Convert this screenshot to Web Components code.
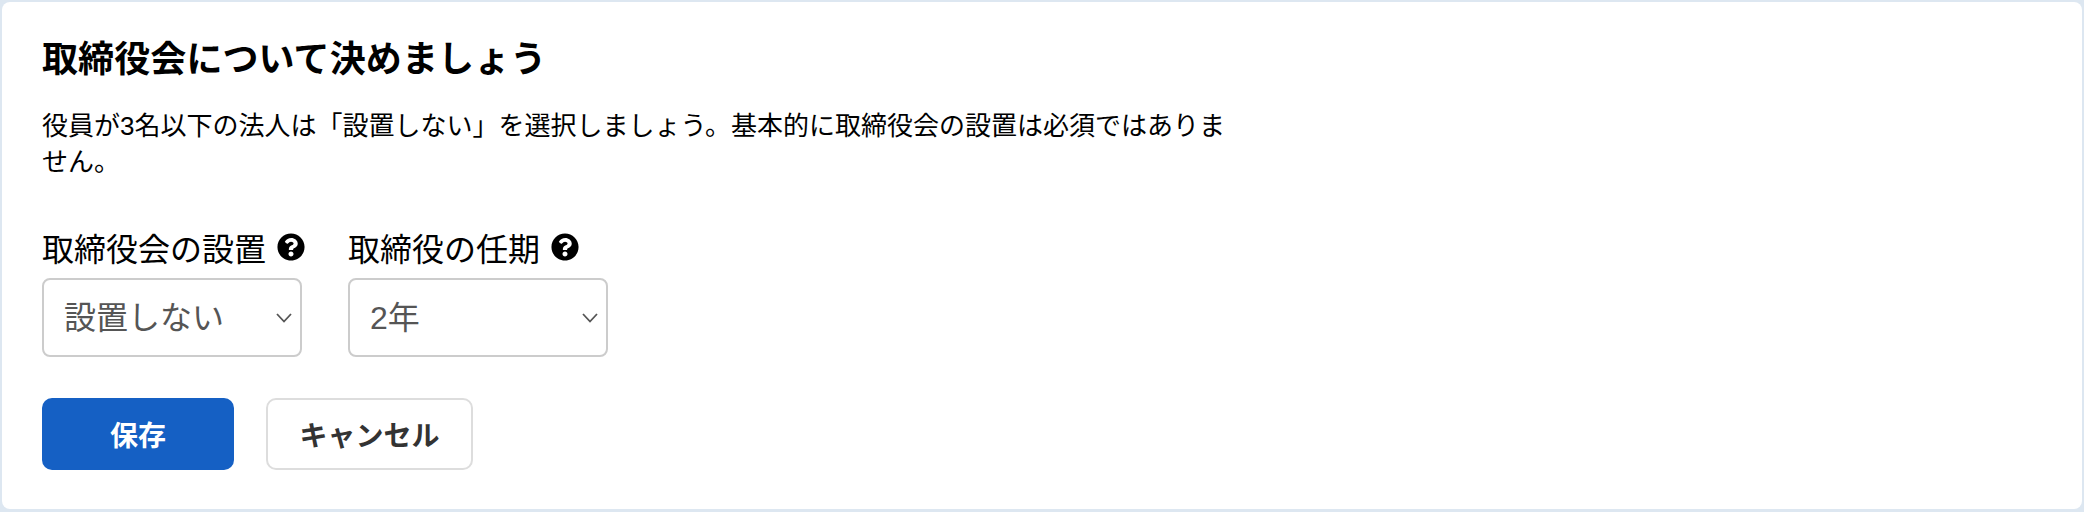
<!DOCTYPE html>
<html lang="ja">
<head>
<meta charset="utf-8">
<title>取締役会</title>
<style>
html, body { margin: 0; height: 100%; background: #dde7f1; }
body { font-family: "Liberation Sans", "Noto Sans CJK JP", sans-serif; color: #000; }
</style>
</head>
<body>
<settings-card>
	<span slot="title">取締役会について決めましょう</span>
	<span slot="lead">役員が3名以下の法人は「設置しない」を選択しましょう。基本的に取締役会の設置は必須ではありません。</span>
	<select-field label="取締役会の設置" value="設置しない"></select-field>
	<select-field label="取締役の任期" value="2年"></select-field>
	<action-button slot="actions" kind="primary">保存</action-button>
	<action-button slot="actions">キャンセル</action-button>
</settings-card>

<script>
class SettingsCard extends HTMLElement {
	constructor() { super();
		this.attachShadow({mode: 'open'}).innerHTML = `
<style>
:host {
	display: block;
	box-sizing: border-box;
	height: 512px;
	padding: 2px 2px 3px;
}
#card {
	box-sizing: border-box;
	height: 100%;
	padding: 31px 40px 0;
	background: #fff;
	border-radius: 8px;
}
h2 {
	margin: 0 0 21px;
	font-size: 36px;
	line-height: 54px;
	font-weight: 700;
	letter-spacing: 0.1px;
}
p {
	margin: 0 0 45px;
	max-width: 1200px;
	font-size: 26px;
	line-height: 36px;
}
#fields { display: flex; gap: 46px; }
#actions { display: flex; gap: 32px; margin-top: 41px; }
</style>
<div id="card">
	<h2><slot name="title"></slot></h2>
	<p><slot name="lead"></slot></p>
	<div id="fields"><slot></slot></div>
	<div id="actions"><slot name="actions"></slot></div>
</div>`;
	}
}
customElements.define('settings-card', SettingsCard);

class SelectField extends HTMLElement {
	constructor() { super();
		this.attachShadow({mode: 'open'}).innerHTML = `
<style>
:host { display: block; width: 260px; }
#label {
	display: flex;
	align-items: center;
	gap: 11px;
	height: 44px;
	margin-bottom: 9px;
	font-size: 32px;
	white-space: nowrap;
}
#label svg { width: 28px; height: 28px; flex: none; }
#box {
	box-sizing: border-box;
	display: flex;
	align-items: center;
	justify-content: space-between;
	height: 79px;
	padding: 0 8px 6px 20px;
	border: 2px solid #ccc;
	border-radius: 8px;
	color: #555;
	font-size: 32px;
}
#box svg { width: 16px; height: 10px; flex: none; margin-top: 6px; }
</style>
<div id="label">
	<span></span>
	<svg viewBox="0 0 512 512"><path fill="#000" d="M504 256c0 136.997-111.043 248-248 248S8 392.997 8 256C8 119.083 119.043 8 256 8s248 111.083 248 248zM262.655 90c-54.497 0-89.255 22.957-116.549 63.758-3.536 5.286-2.353 12.415 2.715 16.258l34.699 26.31c5.205 3.947 12.621 3.008 16.665-2.122 17.864-22.658 30.113-35.797 57.303-35.797 20.429 0 45.698 13.148 45.698 32.958 0 14.976-12.363 22.667-32.534 33.976C247.128 238.528 216 254.941 216 296v4c0 6.627 5.373 12 12 12h56c6.627 0 12-5.373 12-12v-1.333c0-28.462 83.186-29.647 83.186-106.667 0-58.002-60.165-102-116.531-102zM256 338c-25.365 0-46 20.635-46 46 0 25.364 20.635 46 46 46s46-20.636 46-46c0-25.365-20.635-46-46-46z"/></svg>
</div>
<div id="box">
	<span id="value"></span>
	<svg viewBox="0 0 16 10"><path d="M1 1l7 7.5L15 1" fill="none" stroke="#555" stroke-width="1.8"/></svg>
</div>`;
	}
	connectedCallback(){
		this.shadowRoot.querySelector('#label span').textContent = this.getAttribute('label');
		this.shadowRoot.querySelector('#value').textContent = this.getAttribute('value');
	}
}
customElements.define('select-field', SelectField);

class ActionButton extends HTMLElement {
	constructor() { super();
		this.attachShadow({mode: 'open'}).innerHTML = `
<style>
:host {
	display: flex;
	box-sizing: border-box;
	align-items: center;
	justify-content: center;
	width: 207px;
	height: 72px;
	border: 2px solid #ddd;
	border-radius: 10px;
	background: #fff;
	color: #333;
	font-family: "Noto Sans CJK JP", sans-serif;
	font-size: 28px;
	font-weight: 700;
}
:host([kind=primary]) {
	width: 192px;
	border: 0;
	background: #1560c4;
	color: #fff;
}
</style>
<slot></slot>`;
	}
}
customElements.define('action-button', ActionButton);
</script>
</body>
</html>
